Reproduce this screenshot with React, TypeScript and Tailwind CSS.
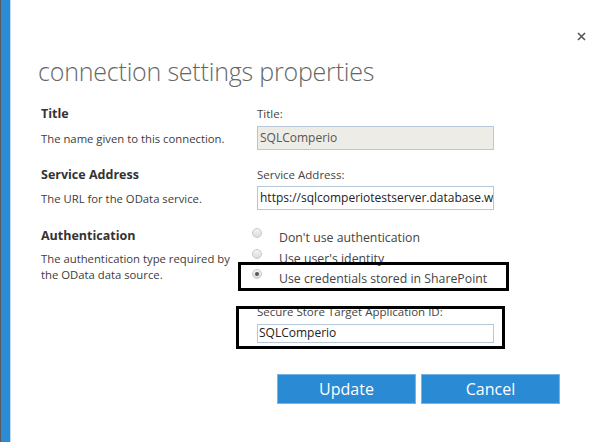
import React from "react";

const Radio = ({ checked }: { checked?: boolean }) => (
  <span className="relative -top-[5px] flex h-[10px] w-[10px] items-center justify-center rounded-full border border-[#c8c8c8] bg-gradient-to-b from-[#f4f4f4] to-[#dcdcdc]">
    {checked && <span className="h-[4px] w-[4px] rounded-full bg-[#555]" />}
  </span>
);

const App = () => {
  return (
    <div
      className="flex h-[442px] w-[605px] overflow-hidden bg-white text-[#444]"
      style={{ fontFamily: '"Open Sans", "Noto Sans", sans-serif' }}
    >
      {/* left edge of the dialog */}
      <div className="w-px bg-[#5a5a5a]" />
      <div className="w-[9px] bg-[#2b8bd5]" />
      <div className="w-px bg-[#bfdcf2]" />

      <div className="flex flex-1 flex-col pl-[27px]">
        {/* close */}
        <div className="flex justify-end pr-[19px] pt-[32px]">
          <svg width="9" height="9" viewBox="0 0 9 9" className="text-[#555]">
            <path d="M1 1L8 8M8 1L1 8" stroke="currentColor" strokeWidth="1.6" />
          </svg>
        </div>

        <h1 className="mt-[14px] text-[25px] font-light leading-[32px] tracking-[-0.2px] text-[#666]">
          connection settings properties
        </h1>

        {/* Title */}
        <div className="mt-[18px] grid grid-cols-[219px_1fr]">
          <div className="pl-[3px]">
            <div className="text-[12.5px] font-bold leading-[18px] text-[#333]">Title</div>
            <div className="mt-[8px] text-[11.3px] leading-[16px] text-[#3c3c3c]">The name given to this connection.</div>
          </div>
          <div>
            <div className="text-[11.5px] leading-[18px]">Title:</div>
            <div className="mt-[3px] flex h-[24px] w-[237px] items-center border border-[#b5c7d8] bg-[#eeece6] px-[2px] text-[12px] text-[#555]">
              SQLComperio
            </div>
          </div>
        </div>

        {/* Service Address */}
        <div className="mt-[16px] grid grid-cols-[219px_1fr]">
          <div className="pl-[3px]">
            <div className="text-[12.5px] font-bold leading-[18px] text-[#333]">Service Address</div>
            <div className="mt-[7px] text-[11.3px] leading-[16px] text-[#3c3c3c]">The URL for the OData service.</div>
          </div>
          <div>
            <div className="text-[11.5px] leading-[18px]">Service Address:</div>
            <div className="mt-[2px] flex h-[24px] w-[237px] items-center overflow-hidden whitespace-nowrap border border-[#b5c7d8] bg-white px-[2px] text-[12px] text-[#222]">
              https://sqlcomperiotestserver.database.windows.net
            </div>
          </div>
        </div>

        {/* Authentication */}
        <div className="mt-[17px] grid grid-cols-[219px_1fr]">
          <div className="pl-[3px]">
            <div className="text-[12.5px] font-bold leading-[18px] text-[#333]">Authentication</div>
            <div className="mt-[6px] w-[192px] text-[11.3px] leading-[16px] text-[#3c3c3c]">
              The authentication type required by the OData data source.
            </div>
          </div>
          <div className="relative">
            <div className="flex flex-col pt-[1px] text-[12.3px] leading-[20.5px]">
              <div className="flex items-center">
                <span className="ml-[-5px] mr-[17px]"><Radio /></span>
                <span>Don't use authentication</span>
              </div>
              <div className="flex items-center">
                <span className="ml-[-5px] mr-[17px]"><Radio /></span>
                <span>Use user's identity</span>
              </div>
              <div className="flex items-center">
                <span className="ml-[-5px] mr-[17px]"><Radio checked /></span>
                <span>Use credentials stored in SharePoint</span>
              </div>
            </div>

            <div className="mt-[13px] text-[11.5px] leading-[18px]">Secure Store Target Application ID:</div>
            <div className="mt-[3px] flex h-[19px] w-[237px] items-center border border-[#b5c7d8] bg-white px-[1px] text-[12px] text-[#222]">
              SQLComperio
            </div>

            {/* annotation boxes drawn over the form */}
            <div className="absolute left-[-19px] top-[35px] h-[29px] w-[271px] border-[3px] border-black" />
            <div className="absolute left-[-21px] top-[79px] h-[43px] w-[269px] border-[3px] border-black" />
          </div>
        </div>

        {/* buttons */}
        <div className="mt-[31px] flex gap-[5px] pl-[239px]">
          <button className="h-[30px] w-[139px] border border-[#74b4e6] bg-[#2a8ad4] text-[16px] text-white">Update</button>
          <button className="h-[30px] w-[139px] border border-[#74b4e6] bg-[#2a8ad4] text-[16px] text-white">Cancel</button>
        </div>
      </div>
    </div>
  );
};

export default App;
